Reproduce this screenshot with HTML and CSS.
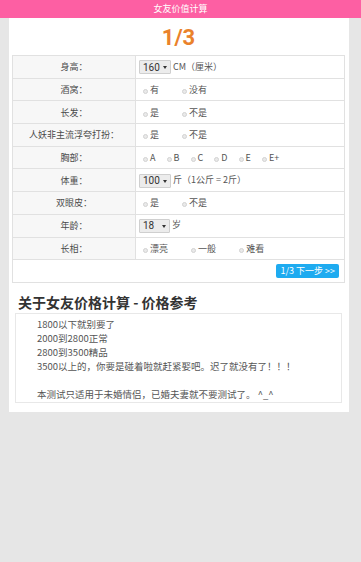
FILE: index.html
```html
<!DOCTYPE html>
<html lang="zh-CN">
<head>
  <meta charset="UTF-8" />
  <meta name="viewport" content="width=device-width, initial-scale=1.0"/>
  <title>女友价值计算</title>
  <link rel="stylesheet" href="styles.css">
</head>
<body>

<div class="topbar">女友价值计算</div>

<div class="page">
  <div class="step">1/3</div>

  <table class="form">
    <tr>
      <th>身高：</th>
      <td><span class="sel"><select><option>160</option></select></span> CM（厘米）</td>
    </tr>
    <tr>
      <th>酒窝：</th>
      <td class="opts">
        <label><input type="radio" name="dimple"> 有</label>
        <label><input type="radio" name="dimple"> 没有</label>
      </td>
    </tr>
    <tr>
      <th>长发：</th>
      <td class="opts">
        <label><input type="radio" name="hair"> 是</label>
        <label><input type="radio" name="hair"> 不是</label>
      </td>
    </tr>
    <tr>
      <th>人妖非主流浮夸打扮：</th>
      <td class="opts">
        <label><input type="radio" name="style"> 是</label>
        <label><input type="radio" name="style"> 不是</label>
      </td>
    </tr>
    <tr>
      <th>胸部：</th>
      <td class="opts cup">
        <label><input type="radio" name="cup"> A</label>
        <label><input type="radio" name="cup"> B</label>
        <label><input type="radio" name="cup"> C</label>
        <label><input type="radio" name="cup"> D</label>
        <label><input type="radio" name="cup"> E</label>
        <label><input type="radio" name="cup"> E+</label>
      </td>
    </tr>
    <tr>
      <th>体重：</th>
      <td><span class="sel"><select><option>100</option></select></span> 斤（1公斤 = 2斤）</td>
    </tr>
    <tr>
      <th>双眼皮：</th>
      <td class="opts">
        <label><input type="radio" name="eyelid"> 是</label>
        <label><input type="radio" name="eyelid"> 不是</label>
      </td>
    </tr>
    <tr>
      <th>年龄：</th>
      <td><span class="sel"><select><option>18</option></select></span> 岁</td>
    </tr>
    <tr>
      <th>长相：</th>
      <td class="opts">
        <label><input type="radio" name="look"> 漂亮</label>
        <label><input type="radio" name="look"> 一般</label>
        <label><input type="radio" name="look"> 难看</label>
      </td>
    </tr>
    <tr>
      <td colspan="2" class="actions"><button class="next">1/3 下一步 &gt;&gt;</button></td>
    </tr>
  </table>

  <h3 class="about-title">关于女友价格计算 - 价格参考</h3>
  <div class="about">
    <p>1800以下就别要了<br>2000到2800正常<br>2800到3500精品<br>3500以上的，你要是碰着啦就赶紧娶吧。迟了就没有了！！！</p>
    <p>本测试只适用于未婚情侣，已婚夫妻就不要测试了。 ^_^</p>
  </div>
</div>

</body>
</html>
```

FILE: styles.css
```css
body {
  margin: 0;
  font-family: "Noto Sans CJK TC", Roboto, sans-serif;
  background: #e6e6e6;
  color: #555;
}

.topbar {
  height: 18px;
  line-height: 18px;
  background: #fd5fa3;
  color: #fff;
  font-size: 9px;
  text-align: center;
}

.page {
  width: 340px;
  margin-left: 9px;
  background: #fff;
  padding: 0 4px 9px 3px;
  box-sizing: border-box;
}

.step {
  height: 37px;
  line-height: 39px;
  text-align: center;
  font-family: Roboto, sans-serif;
  font-size: 22px;
  font-weight: bold;
  color: #ea822b;
}

.form {
  width: 100%;
  border-collapse: collapse;
  font-size: 9px;
}

.form th,
.form td {
  border: 1px solid #e1e1e1;
  height: 21.7px;
  padding: 0;
}

.form th {
  width: 122px;
  background: #f7f7f7;
  font-weight: normal;
  text-align: center;
  color: #4a4a4a;
}

.form td {
  padding-left: 3px;
}

.sel {
  position: relative;
  display: inline-block;
  vertical-align: middle;
}

.sel select {
  appearance: none;
  -webkit-appearance: none;
  height: 14px;
  min-width: 31px;
  padding: 0 10px 0 3px;
  border: 1px solid #cfcfcf;
  border-radius: 1px;
  background: #ececec;
  font-family: Roboto, sans-serif;
  font-size: 10px;
  color: #333;
}

.sel::after {
  content: "";
  position: absolute;
  right: 4px;
  top: 6px;
  border-left: 2px solid transparent;
  border-right: 2px solid transparent;
  border-top: 3px solid #333;
}

.opts label {
  margin-right: 17px;
  white-space: nowrap;
}

.opts.cup label {
  margin-right: 5px;
}

.opts input {
  appearance: none;
  -webkit-appearance: none;
  width: 5px;
  height: 5px;
  margin: 0 0 0 4px;
  border: 1px solid #d2d2d2;
  border-radius: 50%;
  background: #e9e9e9;
  vertical-align: -1px;
}

.form .actions {
  height: 22px;
  text-align: right;
  padding-right: 5px;
}

.next {
  height: 14px;
  padding: 0 4px;
  border: none;
  border-radius: 2px;
  background: #1eabf0;
  color: #fff;
  font-family: "Noto Sans CJK TC", Roboto, sans-serif;
  font-size: 9px;
  line-height: 14px;
  vertical-align: middle;
}

.about-title {
  margin: 10px 0 2px;
  padding-left: 6px;
  font-size: 14px;
  line-height: 18px;
  color: #333;
}

.about {
  margin: 0 3px 0 3px;
  border: 1px solid #e8e8e8;
  padding: 3px 0 1px 21px;
  font-size: 9.5px;
  line-height: 14px;
}

.about p {
  margin: 0 0 14px;
}

.about p:last-child {
  margin-bottom: 0;
}
```
